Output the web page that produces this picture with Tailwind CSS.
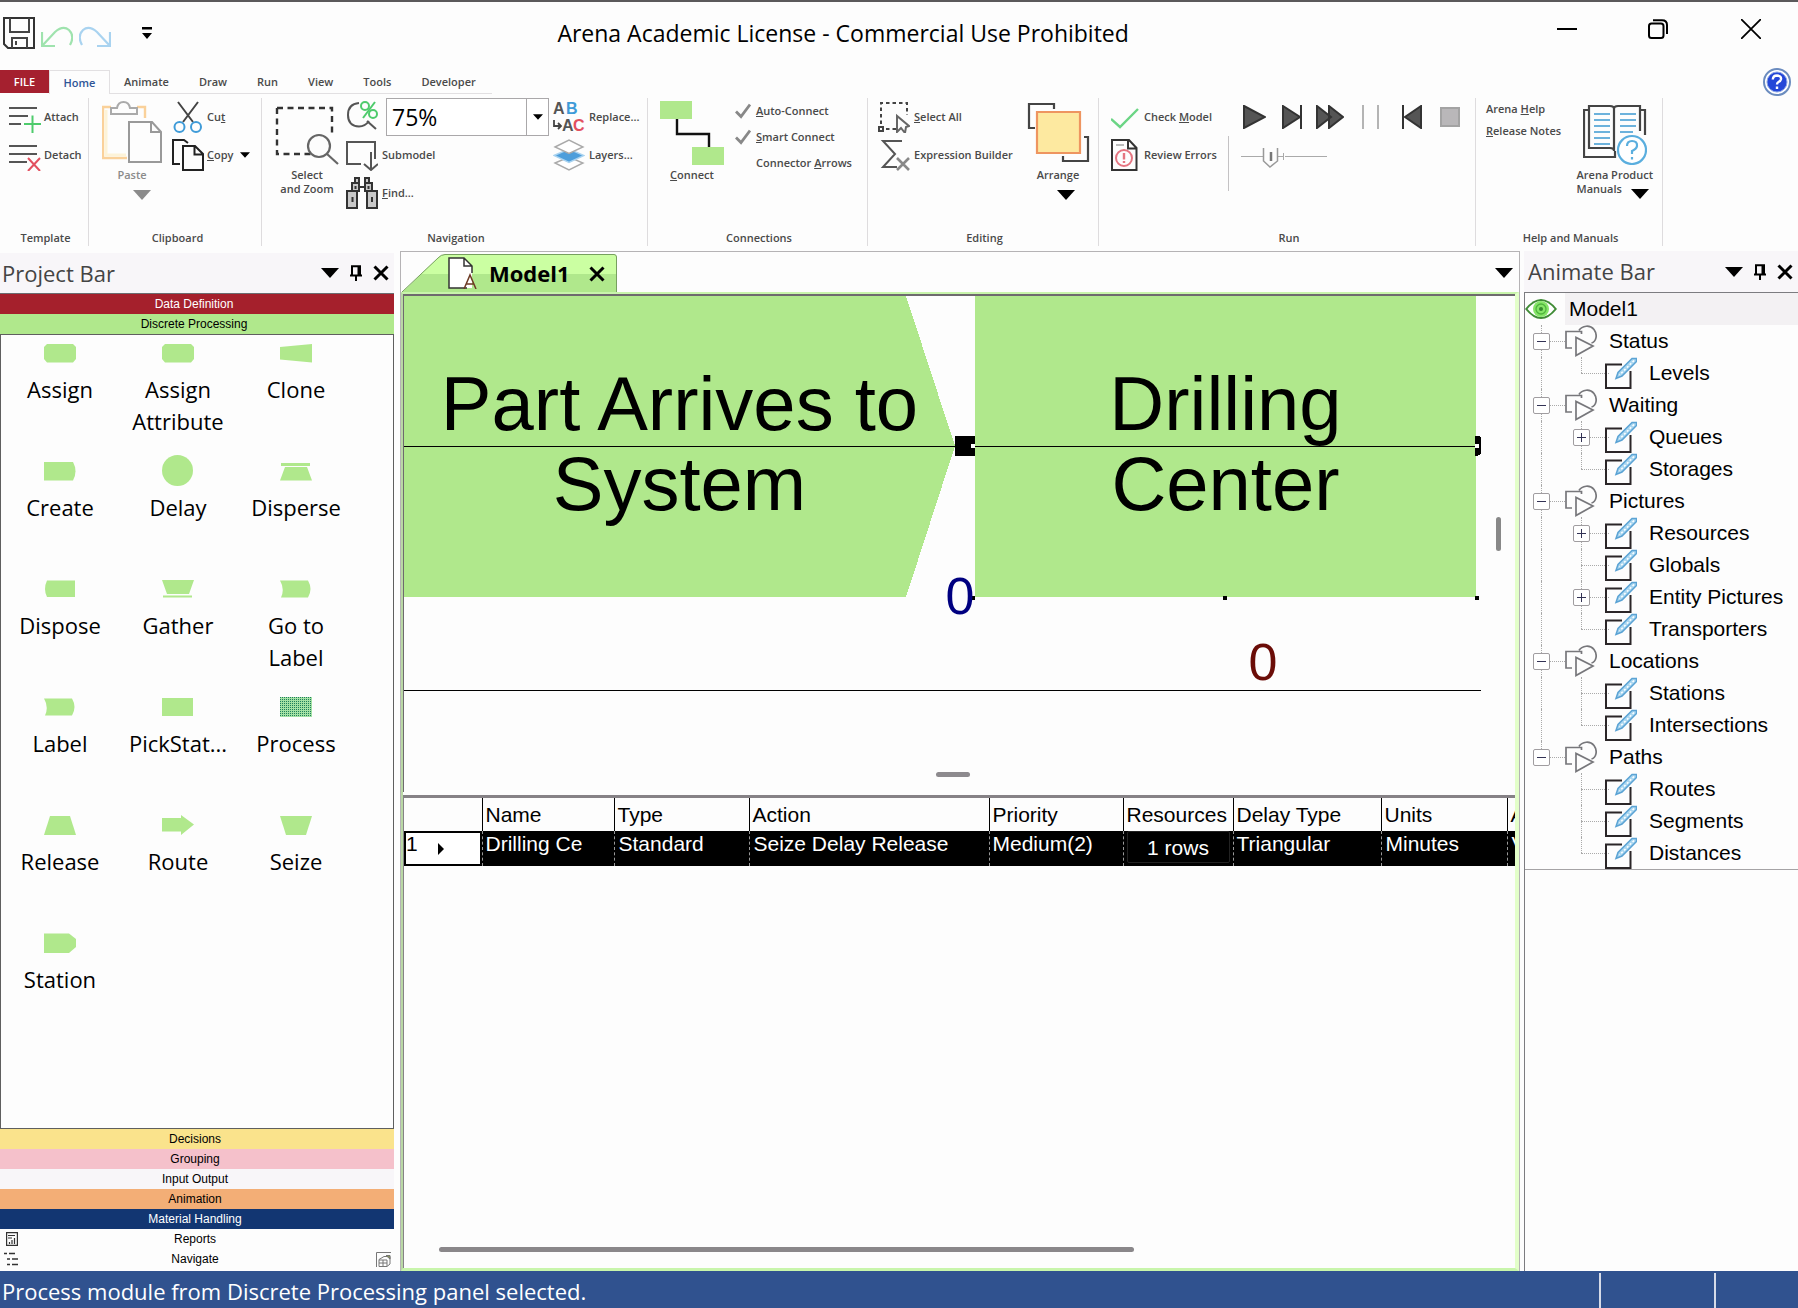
<!DOCTYPE html>
<html lang="en">
<head>
<meta charset="utf-8">
<meta name="viewport" content="width=device-width, initial-scale=1">
<title>Arena Academic License - Commercial Use Prohibited</title>
<script src="https://cdn.jsdelivr.net/npm/@tailwindcss/browser@4"></script>
</head>
<body class="relative flex min-h-screen flex-col overflow-x-hidden border-t-2 border-[#5b595b] bg-[#fdfdfd] font-['Open_Sans','Noto_Sans',sans-serif] text-black">

<svg class="absolute size-0" aria-hidden="true">
  <defs><pattern id="dots" width="2" height="2" patternUnits="userSpaceOnUse"><rect width="2" height="2" fill="#a4e2a4"/><rect width="1" height="1" fill="#1f7f5c"/></pattern></defs>
  <symbol id="down" viewBox="0 0 18 10"><path d="M0 0H18L9 10Z" fill="currentColor"/></symbol>
  <symbol id="pin" viewBox="0 0 14 16"><path d="M3 10V1.200H11V10M1 10.500H13M7 10.500V16" fill="none" stroke="currentColor" stroke-width="2"/><path d="M8.500 1H11.500V10H8.500Z" fill="currentColor"/></symbol>
  <symbol id="cross" viewBox="0 0 16 16"><path d="M1.500 1.500L14.500 14.500M14.500 1.500L1.500 14.500" fill="none" stroke="currentColor" stroke-width="3"/></symbol>
  <symbol id="check" viewBox="0 0 16 16"><path d="M1 8.500L6 13.500L15 1.500" fill="none" stroke="#888" stroke-width="2.800"/></symbol>
  <symbol id="shapes" viewBox="0 0 32 32"><g fill="none" stroke="#77777b" stroke-width="1.700"><path d="M7 23H1V6.500H16.500V9"/><path d="M14 5.500C17 .5 25 -.5 29 4.500C33 10 31 17 26.500 18"/><path d="M11 12.500V30.500L28 21Z"/></g></symbol>
  <symbol id="edit" viewBox="0 0 32 32"><path d="M17 7.500H1V31H25.500V14" fill="none" stroke="#2b2628" stroke-width="2"/><path d="M27 1.500L13 15.500L11 21.500L17 19L31.500 4.500V1.500Z" fill="#a9d6f0" stroke="#5ba3d4" stroke-width="1.500"/><path d="M29 3.500L14.500 18" stroke="#fff" stroke-width="1.500" stroke-dasharray="2 2"/></symbol>
  <symbol id="assign" viewBox="0 0 32 32"><path d="M3 7H29L32 10V22L29 25.500H3L0 22V10Z" fill="#b0e88c"/></symbol>
  <symbol id="clone" viewBox="0 0 32 32"><path d="M0 10L32 7V25.500L0 22.500Z" fill="#b0e88c"/></symbol>
  <symbol id="create" viewBox="0 0 32 32"><path d="M0 7H29Q34 16 29 25.500H0Z" fill="#b0e88c"/></symbol>
  <symbol id="delay" viewBox="0 0 32 32"><circle cx="15.500" cy="15.500" r="15.500" fill="#b0e88c"/></symbol>
  <symbol id="disperse" viewBox="0 0 32 32"><path d="M1 8H30V11H1ZM5 12H27L32 25.500H0Z" fill="#b0e88c"/></symbol>
  <symbol id="dispose" viewBox="0 0 32 32"><path d="M3 7.500H31V24H3Q-1 16 3 7.500Z" fill="#b0e88c"/></symbol>
  <symbol id="gather" viewBox="0 0 32 32"><path d="M0 7H32L27 21H5ZM1 22.500H30V24.500H1Z" fill="#b0e88c"/></symbol>
  <symbol id="label" viewBox="0 0 32 32"><path d="M0 7.500H28Q33 16 28 24.500H1Q5 16 0 7.500Z" fill="#b0e88c"/></symbol>
  <symbol id="pick" viewBox="0 0 32 32"><path d="M0 7H31V25H0Z" fill="#b0e88c"/></symbol>
  <symbol id="process" viewBox="0 0 32 32"><path d="M0 6H32V26H0Z" fill="url(#dots)"/></symbol>
  <symbol id="release" viewBox="0 0 32 32"><path d="M6 7H26L32 26H0Z" fill="#b0e88c"/></symbol>
  <symbol id="route" viewBox="0 0 32 32"><path d="M0 9H19V6L32 15.500L19 26V22.500H0Z" fill="#b0e88c"/></symbol>
  <symbol id="seize" viewBox="0 0 32 32"><path d="M0 7H32L26 26H6Z" fill="#b0e88c"/></symbol>
  <symbol id="station" viewBox="0 0 32 32"><path d="M0 6.500H25L32 12V20L25 26H0Z" fill="#b0e88c"/></symbol>
</svg>

<!-- Title bar -->
<header class="flex h-17 items-start">
  <div class="flex w-[31%] items-center gap-1.5 pt-[15px] pl-[3px]">
    <button aria-label="Save"><svg class="size-8" viewBox="0 0 32 32" fill="none" stroke="#333" stroke-width="2"><path d="M1 1H31V31H5L1 27Z"/><path d="M7 1V15H26V1M9 31V21H24V31M13 24V28" stroke="#444"/></svg></button>
    <button aria-label="Undo"><svg class="size-8" viewBox="0 0 32 32" fill="none" stroke="#9fe3ae" stroke-width="2.200"><path d="M1 15V29H14M1 29L14 15Q22 8 28 13Q34 19 29 28"/></svg></button>
    <button aria-label="Redo"><svg class="size-8" viewBox="0 0 32 32" fill="none" stroke="#a9d3f0" stroke-width="2.200"><path d="M31 15V29H18M31 29L18 15Q10 8 4 13Q-2 19 3 28"/></svg></button>
    <button aria-label="Customize quick access" class="pl-[25px]"><svg class="h-3 w-2.5" viewBox="0 0 10 12"><path d="M0 0H10V2.500H0ZM0 6H10L5 12Z"/></svg></button>
  </div>
  <h1 class="pt-[15px] text-[23px] leading-8 whitespace-nowrap">Arena Academic License - Commercial Use Prohibited</h1>
  <div class="flex flex-1 justify-end gap-[71px] pt-[17px] pr-[37px]">
    <button aria-label="Minimize"><svg class="size-5" viewBox="0 0 20 20"><path d="M0 10H20" stroke="#000" stroke-width="2"/></svg></button>
    <button aria-label="Restore"><svg class="size-5" viewBox="0 0 20 20" fill="none" stroke="#000" stroke-width="2"><rect x="1" y="4.500" width="14.500" height="14.500" rx="2.500"/><path d="M5 1.200H14Q19 1.200 19 6V15"/></svg></button>
    <button aria-label="Close" class="ml-[2px]"><svg class="size-5" viewBox="0 0 20 20" stroke="#000" stroke-width="1.800"><path d="M0 0L20 20M20 0L0 20"/></svg></button>
  </div>
</header>

<!-- Ribbon tabs -->
<nav class="flex h-7 items-start justify-between pr-[7px] text-[11px] font-semibold text-[#4a4a4a]">
  <div class="flex h-6">
    <button class="h-[23px] w-[49px] bg-[#a5202f] pt-0.5 text-white">FILE</button>
    <button class="w-[61px] border border-b-0 border-[#e2e0e2] pt-0.5 text-[#2f5597]">Home</button>
    <div class="flex gap-[30px] border-b border-[#e2e0e2] pt-0.5 pr-4 pl-3.5">
      <button>Animate</button><button>Draw</button><button>Run</button><button>View</button><button>Tools</button><button>Developer</button>
    </div>
  </div>
  <button aria-label="Help" class="-mt-0.5"><svg class="size-7" viewBox="0 0 28 28"><circle cx="14" cy="14" r="13" fill="#fff" stroke="#6b8cbf" stroke-width="2"/><circle cx="14" cy="14" r="10" fill="#2447d8" stroke="#8aa5e6"/><path d="M9.800 11.500Q10 7.500 14 7.500Q18.500 7.800 18 11.200Q17.600 13 15.500 14Q14 14.800 14 16.500M14 18.500V21" fill="none" stroke="#fff" stroke-width="2.400"/></svg></button>
</nav>

<!-- Ribbon -->
<section class="flex h-[153px] items-start text-[11px] leading-3.5 font-semibold text-[#4a4a4a]">
  <div class="flex h-37 w-[89px] flex-col border-r border-[#dedcde]">
    <div class="flex-1 pl-[9px]">
      <button class="flex h-[38px] items-center gap-[3px]"><svg class="size-8" viewBox="0 0 32 32" fill="none"><path d="M0 7H28M0 15H19M0 23H12" stroke="#555" stroke-width="2"/><path d="M23.500 14.500V32M15 23H32" stroke="#4ecb6c" stroke-width="2"/></svg>Attach</button>
      <button class="flex h-[38px] items-center gap-[3px]"><svg class="size-8" viewBox="0 0 32 32" fill="none"><path d="M0 7H28M0 15H28M0 23H18" stroke="#555" stroke-width="2"/><path d="M19 19L31 32M31 19L19 32" stroke="#e2505f" stroke-width="2"/></svg>Detach</button>
    </div>
    <h2 class="pb-px pl-[3px] text-center">Template</h2>
  </div>
  <div class="flex h-37 w-[173px] flex-col border-r border-[#dedcde]">
    <div class="flex flex-1 gap-1.5 pl-[13px]">
      <button class="flex flex-col items-center pt-[3px] text-[#8b8b8b]"><svg class="size-16" viewBox="0 0 64 64" fill="none" stroke-width="2"><path d="M9 6H1V57H25M35 6H43V17" stroke="#fad19a" stroke-width="2.400"/><path d="M4 9V54H24" stroke="#fdf3d8" stroke-width="3"/><path d="M9 13V7H15Q16 1 21.500 1Q27 1 28 7H35V13Z" stroke="#aaa"/><path d="M27 21H50L59 31V61H27ZM49 21V31H59" stroke="#999"/></svg><span class="mt-[3px] mr-1">Paste</span><svg class="mt-2 ml-4 h-2.5 w-4.5"><use href="#down"/></svg></button>
      <div>
        <button class="flex h-[38px] items-center gap-[3px]"><svg class="size-8" viewBox="0 0 32 32" fill="none"><path d="M6 1L21 21M26 1L11 21" stroke="#444" stroke-width="2"/><circle cx="7.500" cy="26" r="5" stroke="#3f9bd8" stroke-width="2"/><circle cx="24" cy="26" r="5" stroke="#3f9bd8" stroke-width="2"/></svg><span>Cu<u>t</u></span></button>
        <button class="flex h-[38px] items-center gap-[3px]"><svg class="size-8" viewBox="0 0 32 32" fill="none" stroke="#222" stroke-width="2"><path d="M8 25H1V1H12L16 4"/><path d="M11 7H23L31 15V31H11ZM22.500 7V15.500H31"/></svg><span><u>C</u>opy</span><svg class="ml-1 h-1.5 w-2.5 text-black"><use href="#down"/></svg></button>
      </div>
    </div>
    <h2 class="pb-px pl-[5px] text-center">Clipboard</h2>
  </div>
  <div class="flex h-37 w-[386px] flex-col border-r border-[#dedcde]">
    <div class="flex flex-1 pl-3">
      <button class="flex w-[66px] flex-col items-center pt-[3px]"><svg class="size-16" viewBox="0 0 64 64" fill="none"><path d="M2 7H57V34M2 7V53H38" stroke="#333" stroke-width="2.400" stroke-dasharray="6 4.500"/><circle cx="44" cy="45" r="11" stroke="#666" stroke-width="2.200"/><path d="M52 53L63 63" stroke="#666" stroke-width="2.200"/></svg><span class="mt-[3px] whitespace-nowrap">Select<br>and Zoom</span></button>
      <div class="ml-1.5">
        <div class="flex h-[38px] items-start gap-2"><svg class="mt-[3px] size-8" viewBox="0 0 32 32" fill="none"><path d="M13 2Q2 3 2 14Q2 25 13 25.500Q19 25.500 23 20M21 20L30 28" stroke="#555" stroke-width="2"/><circle cx="19" cy="5" r="4" stroke="#4ecb6c" stroke-width="2"/><circle cx="27" cy="13" r="4" stroke="#4ecb6c" stroke-width="2"/><path d="M29 1L17 17" stroke="#4ecb6c" stroke-width="2"/></svg>
          <div class="relative h-[38px] w-[163px]"><select aria-label="Zoom level" class="size-full appearance-none border border-[#aaa8aa] bg-white py-0 pl-[5px] text-[23px] leading-8 font-normal text-black"><option>75%</option></select><span class="pointer-events-none absolute inset-y-0 right-0 flex w-[23px] items-center justify-center border-l border-[#aaa8aa] text-black"><svg class="h-1.5 w-2.5"><use href="#down"/></svg></span></div></div>
        <button class="flex h-[38px] items-center gap-1"><svg class="size-8" viewBox="0 0 32 32" fill="none" stroke="#555" stroke-width="2"><path d="M15 25H1V3H29V20M25 13V31M18 25L25 31L32 25"/></svg>Submodel</button>
        <button class="flex h-[38px] items-center gap-1"><svg class="size-8" viewBox="0 0 32 32" fill="#c9c9c9" stroke="#333" stroke-width="2"><path d="M9 1H13V6H9ZM19 1H23V6H19ZM6 6H13V14H6ZM19 6H26V14H19ZM1 14H11V31H1ZM21 14H31V31H21Z"/><path d="M13 10H19M9.500 9V12M22.500 9V12M6.500 20V25M26 20V25"/></svg><span><u>F</u>ind...</span></button>
      </div>
      <div class="ml-1">
        <button class="flex h-[38px] items-center gap-1"><svg class="size-8 overflow-visible font-['Liberation_Sans',sans-serif]" viewBox="0 0 32 32"><text x="0" y="13" font-size="16" fill="#555">A</text><text x="13" y="13" font-size="16" fill="#3f9bd8">B</text><text x="9" y="30" font-size="16" fill="#555">A</text><text x="20" y="30" font-size="16" fill="#e2505f">C</text><path d="M1 19V25H8M5 22L8 25L5 28" fill="none" stroke="#444" stroke-width="1.800"/></svg>Replace...</button>
        <button class="flex h-[38px] items-center gap-1"><svg class="size-8" viewBox="0 0 32 32" fill="#fff" stroke="#aaa" stroke-width="1.400"><path d="M2 24L16 18L30 24L16 31Z"/><path d="M1 16.500L16 10L31 16.500L16 23.500Z" fill="#4d9edb" stroke="#a9d3f0"/><path d="M2 8L16 1L30 8L16 14.500Z"/></svg>Layers...</button>
      </div>
    </div>
    <h2 class="pb-px pl-[3px] text-center">Navigation</h2>
  </div>
  <div class="flex h-37 w-[220px] flex-col border-r border-[#dedcde]">
    <div class="flex flex-1 pl-3">
      <button class="flex flex-col items-center pt-[3px]"><svg class="size-16" viewBox="0 0 64 64"><path d="M17 18V33H49V46" fill="none" stroke="#111" stroke-width="2.400"/><path d="M0 0H32V18H0ZM32 46H64V64H32Z" fill="#b0e88c"/></svg><span class="mt-[3px]"><u>C</u>onnect</span></button>
      <div class="ml-[11px]">
        <button class="flex h-[26px] items-center gap-[5px]"><svg class="size-4"><use href="#check"/></svg><span><u>A</u>uto-Connect</span></button>
        <button class="flex h-[26px] items-center gap-[5px]"><svg class="size-4"><use href="#check"/></svg><span><u>S</u>mart Connect</span></button>
        <button class="flex h-[26px] items-center pl-[21px]"><span>Connector <u>A</u>rrows</span></button>
      </div>
    </div>
    <h2 class="pb-px pl-[3px] text-center">Connections</h2>
  </div>
  <div class="flex h-37 w-[231px] flex-col border-r border-[#dedcde]">
    <div class="flex flex-1 justify-between pr-2 pl-2.5">
      <div>
        <button class="flex h-[38px] items-center gap-1"><svg class="size-8" viewBox="0 0 32 32" fill="none" stroke="#444" stroke-width="2"><path d="M3 23V2H29V14M8 28H18" stroke-dasharray="3.500 3"/><path d="M1 26H5V30H1Z"/><path d="M19 15V31L23 27L27 32L28 26L31 25Z" stroke="#666"/></svg><span><u>S</u>elect All</span></button>
        <button class="flex h-[38px] items-center gap-1"><svg class="size-8" viewBox="0 0 32 32" fill="none" stroke="#555" stroke-width="2"><path d="M24 2H5L17 15L5 28H19"/><path d="M19 19L31 31M31 19L19 31" stroke="#888" stroke-width="2.600"/></svg><span>Expression Builder</span></button>
      </div>
      <button class="flex flex-col items-center pt-[3px]"><svg class="size-16" viewBox="0 0 64 64" fill="none" stroke="#444" stroke-width="2.200"><path d="M28 8V3H3V27H9M58 36H62V60H37V55"/><path d="M11 11H54V52H11Z" fill="#fde9a0" stroke="#ee9560"/></svg><span class="mt-[3px]">Arrange</span><svg class="mt-2 ml-4 h-2.5 w-4.5 text-black"><use href="#down"/></svg></button>
    </div>
    <h2 class="pb-px pl-[3px] text-center">Editing</h2>
  </div>
  <div class="flex h-37 w-[377px] flex-col border-r border-[#dedcde]">
    <div class="flex flex-1 pl-3">
      <div>
        <button class="flex h-[38px] items-center gap-[5px]"><svg class="size-7" viewBox="0 0 28 28"><path d="M0 16L9 24L27 6" fill="none" stroke="#6bd585" stroke-width="2.400"/></svg><span>Check <u>M</u>odel</span></button>
        <button class="flex h-[38px] items-center gap-[5px]"><svg class="h-8 w-7" viewBox="0 0 28 32" fill="none" stroke="#333" stroke-width="2"><path d="M1 1H18L25.500 9V31H1ZM17 1V9.500H25"/><path d="M5 6H13" stroke="#bbb"/><circle cx="13" cy="19" r="8" stroke="#e57581"/><path d="M13 14V20.500M13 22V24" stroke="#e57581" stroke-width="2.400"/></svg><span>Review Errors</span></button>
      </div>
      <div class="mt-[38px] ml-[11px] h-[55px] border-l border-[#c4c2c4]"></div>
      <div class="flex flex-col pl-3">
        <div class="flex h-[38px] items-center">
          <button aria-label="Go" class="w-[39px] pl-0.5"><svg class="h-6 w-[23px]" viewBox="0 0 23 24"><path d="M1 1L22 12L1 23Z" fill="#555" stroke="#333" stroke-width="2"/></svg></button>
          <button aria-label="Step" class="w-9 pl-0.5"><svg class="h-6 w-5" viewBox="0 0 20 24"><path d="M1 1L18 12L1 23Z" fill="#555" stroke="#333" stroke-width="2"/><path d="M19 0V24" stroke="#333" stroke-width="2"/></svg></button>
          <button aria-label="Fast forward" class="w-[46px]"><svg class="h-6 w-7" viewBox="0 0 28 24" fill="#555" stroke="#333" stroke-width="2"><path d="M1 1L15 12L1 23ZM13 1L27 12L13 23Z"/></svg></button>
          <button aria-label="Pause" class="w-[38px]"><svg class="h-6 w-[17px]" viewBox="0 0 17 24"><path d="M1 0V24M16 0V24" stroke="#b4b4b4" stroke-width="2"/></svg></button>
          <button aria-label="Start over" class="w-10 pl-0.5"><svg class="h-6 w-5" viewBox="0 0 20 24"><path d="M19 1L3 12L19 23Z" fill="#555" stroke="#333" stroke-width="2"/><path d="M1 0V24" stroke="#333" stroke-width="2"/></svg></button>
          <button aria-label="End"><svg class="size-5" viewBox="0 0 20 20"><path d="M1 1H19V19H1Z" fill="#b9b7b9" stroke="#a3a3a3" stroke-width="2"/></svg></button>
        </div>
        <div class="relative h-10"><input type="range" aria-label="Run speed" class="absolute inset-0 h-10 w-[86px] cursor-pointer opacity-0"><svg class="pointer-events-none h-10 w-[88px]" viewBox="0 0 88 40" fill="none" stroke="#aaa"><path d="M0 20.500H22M37 20.500H42M44 20.500H86M42.500 17V24"/><path d="M22.500 12V25L29 31L36.500 25V12" stroke="#999" stroke-width="1.500"/><path d="M30 16V25" stroke="#777" stroke-width="2.500"/></svg></div>
      </div>
    </div>
    <h2 class="pb-px pl-1 text-center">Run</h2>
  </div>
  <div class="flex h-37 w-[187px] flex-col border-r border-[#dedcde]">
    <div class="flex flex-1 justify-between pr-[9px] pl-2.5">
      <div class="flex flex-col items-start gap-2 pt-1">
        <button class="whitespace-nowrap">Arena <u>H</u>elp</button>
        <button class="whitespace-nowrap"><u>R</u>elease Notes</button>
      </div>
      <button class="relative flex flex-col items-center pt-[3px] whitespace-nowrap"><svg class="size-16" viewBox="0 0 64 64" fill="none" stroke="#444" stroke-width="2.200"><path d="M31 8Q31 5 27 5H6V47H27Q31 47 31 50V8Q31 5 35 5H57V30M6 9H1V56H32V50M57 9H62V34"/><path d="M11 13H27M11 19H27M11 25H27M11 31H27M11 37H27M11 43H27M37 13H53M37 19H53M37 25H53M37 31H50" stroke="#6cb2dc" stroke-width="2"/><circle cx="49" cy="49" r="14" fill="#fff" stroke="#5aaede"/><path d="M44 45Q44 40 49 40Q54.500 40 54 45Q53.500 48 49 50V53M49 56V58.500" stroke="#5aaede"/></svg><span class="mt-[3px] text-left">Arena Product<br>Manuals</span><svg class="absolute top-[91px] right-1 h-2.5 w-4.5 text-black"><use href="#down"/></svg></button>
    </div>
    <h2 class="pb-px pl-[3px] text-center">Help and Manuals</h2>
  </div>
</section>

<div class="flex flex-1 items-stretch">
  <!-- Project Bar -->
  <aside class="mr-1.5 flex w-[394px] shrink-0 flex-col pt-0.5 font-['Liberation_Sans',Arial,sans-serif] text-[12px]">
    <div class="flex h-[41px] items-center justify-between border-b border-[#6c6c70] bg-[#f8f6f9] pr-[5px] pl-0.5">
      <h2 class="font-['Open_Sans','Noto_Sans',sans-serif] text-[22px] text-[#444]">Project Bar</h2>
      <div class="flex items-center gap-2.5"><button aria-label="Window position"><svg class="h-2.5 w-4.5"><use href="#down"/></svg></button><button aria-label="Auto hide"><svg class="h-4 w-3.5"><use href="#pin"/></svg></button><button aria-label="Close Project Bar"><svg class="size-4"><use href="#cross"/></svg></button></div>
    </div>
    <button class="h-5 w-full bg-[#a5202c] pr-1.5 text-white">Data Definition</button>
    <button class="h-5 w-full bg-[#b0e88c] pr-1.5">Discrete Processing</button>
    <div class="flex-1 border border-[#5f5f5f] bg-[#fdfdfd]">
      <div id="modules" class="grid w-[354px] grid-cols-3 font-['Open_Sans','Noto_Sans',sans-serif] text-[22px] leading-8"></div>
    </div>
    <button class="h-5 w-full bg-[#fae38c] pr-1">Decisions</button>
    <button class="h-5 w-full bg-[#f5c1cb] pr-1">Grouping</button>
    <button class="h-5 w-full bg-[#f8f6f9] pr-1">Input Output</button>
    <button class="h-5 w-full bg-[#f3ae76] pr-1">Animation</button>
    <button class="h-5 w-full bg-[#123672] pr-1 text-white">Material Handling</button>
    <button class="flex h-5 w-full items-center pr-[18px] pl-1.5"><svg class="h-3.5 w-3" viewBox="0 0 12 14" fill="none" stroke="#333" stroke-width="1.200"><path d="M.6.6H11.400V13.400H.6ZM2 3.500H9M2 6H6M3.500 12V10M6 12V8M8.500 12V6"/></svg><span class="flex-1 pr-1">Reports</span></button>
    <button class="flex h-[22px] w-full items-center pr-[3px] pb-0.5 pl-1"><svg class="h-3.5 w-3.5" viewBox="0 0 14 14" stroke="#333" stroke-width="1.400"><path d="M0 1.500H3M5 1.500H11M3 7H6M8 7H14M3 12.500H6M8 12.500H14"/></svg><span class="flex-1 pr-1">Navigate</span><svg class="size-[15px]" viewBox="0 0 15 15" fill="none" stroke="#777"><path d="M.5 15V.5H15M3 14.500V7.500L8 4.500H14V12L11 14.500ZM3 8H11V14M3 11H11M7 8V14"/><path d="M10 3.500H14V7Z" fill="#8c9a5a"/></svg></button>
  </aside>

  <!-- Model window -->
  <main class="flex min-w-0 flex-1 flex-col border-t border-r border-l border-[#b5b3b5]">
    <div class="flex h-10 items-end justify-between pt-0.5 pr-1.5">
      <div class="relative flex h-[38px] w-[216px] items-center">
        <svg class="absolute inset-0 h-full w-full" viewBox="0 0 216 38"><path d="M1 38.500L37 4Q40 .5 44 .5H214L216 3V38.500Z" fill="#b0e88c"/><path d="M20 20L37 4Q40 1 44 1H215V20Z" fill="#cbffa2"/><path d="M1 38L37 4Q40 .5 44 .5H213Q215.500 .5 215.500 3V38" fill="none" stroke="#77a05f"/></svg>
        <svg class="relative ml-[46px] h-8 w-8" viewBox="0 0 32 32"><path d="M2 1H17L25 9V31H2Z" fill="#fff"/><path d="M20 31H2V1H17L25 9V16M17 1V9H25" fill="none" stroke="#333" stroke-width="1.500"/><path d="M17 32L23 18L29 32M19 27H27" fill="none" stroke="#6d3b25" stroke-width="1.500"/></svg>
        <a href="#canvas" class="relative ml-2.5 text-[22px] font-bold">Model1</a>
        <button aria-label="Close Model1" class="absolute top-3 right-3"><svg class="size-4"><use href="#cross"/></svg></button>
      </div>
      <button aria-label="Open documents" class="self-center"><svg class="h-2.5 w-4.5"><use href="#down"/></svg></button>
    </div>
    <div class="flex flex-1 flex-col border-t-2 border-r-4 border-b-[3px] border-l-2 border-[#c8f5ab] border-r-[#e3ffc9] border-l-[#b9d8a5]">
      <div id="canvas" class="relative h-[498px] overflow-hidden border-t-2 border-l border-[#6e6a6e] bg-[#fdfdfd] font-['Liberation_Sans',Arial,sans-serif]">
        <svg class="absolute top-0 left-0 h-[496px] w-[1078px]" viewBox="404 296 1078 496" shape-rendering="crispEdges">
          <path d="M404 296H906L955 446L906 597H404ZM975 296H1476V597H975Z" fill="#b0e88c"/>
          <path d="M955 436H975V456H955ZM1475 436H1479L1481 438V454L1477 456H1475ZM971 596H975V600H971ZM1223 596H1227V600H1223ZM1475 596H1479V600H1475Z"/>
          <path d="M404 446.500H1475M404 690.500H1481" stroke="#000"/>
          <path d="M971 444H975V448H971ZM1475 444H1479V448H1475Z" fill="#fff"/>
        </svg>
        <p class="absolute top-[68px] left-0 w-[551px] text-center text-[76px] leading-20">Part Arrives to<br>System</p>
        <p class="absolute top-[68px] left-[571px] w-[501px] text-center text-[76px] leading-20">Drilling<br>Center</p>
        <span class="absolute top-[272px] left-[540px] w-8 text-center text-[52px] leading-14 text-[#000080]">0</span>
        <span class="absolute top-[338px] left-[843px] w-8 text-center text-[52px] leading-14 text-[#6b0d08]">0</span>
        <div class="absolute top-[221px] right-3.5 h-[34px] w-[5px] rounded-full bg-[#888]"></div>
        <div class="absolute top-[476px] left-1/2 -ml-6 h-[5px] w-[34px] rounded-full bg-[#8d8a8e]"></div>
      </div>
      <div class="mt-[3px] flex flex-1 flex-col overflow-hidden border-t-[3px] border-l border-[#868286] bg-[#fdfdfd] font-['Liberation_Sans',Arial,sans-serif] text-[21px]">
        <table class="w-[1185px] table-fixed border-collapse text-left">
          <colgroup><col class="w-[78px]"><col class="w-[132px]"><col class="w-[135px]"><col class="w-[240px]"><col class="w-[134px]"><col class="w-[110px]"><col class="w-[148px]"><col class="w-[126px]"><col></colgroup>
          <thead><tr class="h-[33px] [&>th]:border-r [&>th]:border-black [&>th]:px-[3px] [&>th]:py-0 [&>th]:font-normal [&>th]:whitespace-nowrap"><th></th><th>Name</th><th>Type</th><th>Action</th><th>Priority</th><th>Resources</th><th>Delay Type</th><th>Units</th><th>Allocation</th></tr></thead>
          <tbody><tr class="h-[35px] bg-black text-white [&>td]:border-r [&>td]:border-dashed [&>td]:border-[#999] [&>td]:py-0 [&>td]:align-top [&>td]:leading-[26px] [&>td]:whitespace-nowrap">
            <td class="px-0.5"><div class="mt-0.5 flex h-[31px] items-start gap-5 bg-white text-black"><span class="-mt-0.5">1</span><svg class="mt-2.5 h-3 w-1.5" viewBox="0 0 6 12"><path d="M0 0L6 6L0 12Z"/></svg></div></td><td class="px-[3px]">Drilling Ce</td><td class="px-1">Standard</td><td class="px-1">Seize Delay Release</td><td class="px-[3px]">Medium(2)</td><td class="px-[3px]"><button class="h-8 w-full rounded-xs border border-[#222] pt-0.5">1 rows</button></td><td class="px-[3px]">Triangular</td><td class="px-1">Minutes</td><td class="px-1">Value</td></tr></tbody>
        </table>
        <div class="mt-auto mb-4 ml-[35px] h-[5px] w-[695px] rounded-full bg-[#8a878a]"></div>
      </div>
    </div>
  </main>

  <!-- Animate Bar -->
  <aside class="ml-1 flex w-[274px] shrink-0 flex-col">
    <div class="flex h-[41px] items-center justify-between bg-[#f8f6f9] pr-[5px] pl-1">
      <h2 class="text-[22px] text-[#444]">Animate Bar</h2>
      <div class="flex items-center gap-2.5"><button aria-label="Window position"><svg class="h-2.5 w-4.5"><use href="#down"/></svg></button><button aria-label="Auto hide"><svg class="h-4 w-3.5"><use href="#pin"/></svg></button><button aria-label="Close Animate Bar"><svg class="size-4"><use href="#cross"/></svg></button></div>
    </div>
    <div class="flex-1 border-t border-l border-[#7c7c80] font-['Liberation_Sans',Arial,sans-serif] text-[21px] leading-8">
      <ul id="tree" class="border-b border-[#a5a3a5]">
        <li class="flex h-8 items-center"><svg class="h-5 w-8" viewBox="0 0 32 20"><path d="M0 10Q8 0 16 0Q24 0 32 10Q24 20 16 20Q8 20 0 10Z" fill="#3f8b35"/><path d="M2.500 10Q9 2 16 2Q23 2 29.500 10Q23 18 16 18Q9 18 2.500 10Z" fill="#fff"/><circle cx="16" cy="10" r="8" fill="#86e568"/><circle cx="16" cy="10" r="5" fill="none" stroke="#4fb43d" stroke-width="1.300"/><circle cx="16" cy="10" r="2" fill="#338a2c"/></svg><span class="ml-2 h-8 flex-1 bg-[#f3f1f3] pl-1">Model1</span></li>
      </ul>
    </div>
  </aside>
</div>

<footer class="flex h-[37px] items-stretch bg-[#30528f] text-[22px] leading-8 text-white">
  <p class="flex-1 pt-1 pl-0.5">Process module from Discrete Processing panel selected.</p>
  <div class="mt-0.5 w-[115px] border-l-2 border-[#d5dbe8]"></div>
  <div class="mt-0.5 w-[84px] border-l-2 border-[#d5dbe8]"></div>
</footer>

<script>
const modules = [['assign','Assign'],['assign','Assign Attribute'],['clone','Clone'],['create','Create'],['delay','Delay'],['disperse','Disperse'],['dispose','Dispose'],['gather','Gather'],['label','Go to Label'],['label','Label'],['pick','PickStat...'],['process','Process'],['release','Release'],['route','Route'],['seize','Seize'],['station','Station']];
document.getElementById('modules').innerHTML = modules.map(([icon, name]) =>
  `<button class="flex h-[118px] flex-col items-center px-2 pt-0.5"><svg class="size-8 shrink-0"><use href="#${icon}"/></svg><span class="mt-1">${name}</span></button>`).join('');

const tree = [['Status',['Levels']],['Waiting',['+Queues','Storages']],['Pictures',['+Resources','Globals','+Entity Pictures','Transporters']],['Locations',['Stations','Intersections']],['Paths',['Routes','Segments','Distances']]];
const expander = (sign) => `<button aria-label="Toggle" class="relative flex size-[17px] items-center justify-center rounded-xs border border-[#a09da0] bg-white"><svg class="size-[9px]" viewBox="0 0 9 9" stroke="#335"><path d="${sign === '+' ? 'M0 4.5H9M4.5 0V9' : 'M0 4.500H9'}"/></svg></button>`;
const spine = (half) => `<i class="absolute top-0 left-1/2 border-l border-dotted border-[#aaa] ${half ? 'h-1/2' : 'h-full'}"></i>`;
const branch = '<i class="absolute top-1/2 -right-2 left-1/2 border-t border-dotted border-[#aaa]"></i>';
let rows = '';
tree.forEach(([name, kids], i) => {
  const last = i === tree.length - 1;
  rows += `<li class="flex h-8 items-center"><div class="relative flex h-8 w-8 items-center justify-center">${spine(last)}${branch}${expander('-')}</div><svg class="ml-2 size-8"><use href="#shapes"/></svg><span class="ml-3">${name}</span></li>`;
  kids.forEach((kid, j) => {
    const plus = kid[0] === '+';
    rows += `<li class="flex h-8 items-center"><div class="relative h-8 w-8">${last ? '' : spine(false)}</div><div class="relative ml-1 flex h-8 w-10 items-center justify-center">${spine(j === kids.length - 1)}${branch}${plus ? expander('+') : ''}</div><svg class="relative ml-1 size-8"><use href="#edit"/></svg><span class="ml-3 whitespace-nowrap">${plus ? kid.slice(1) : kid}</span></li>`;
  });
});
document.getElementById('tree').insertAdjacentHTML('beforeend', rows);
</script>
</body>
</html>
